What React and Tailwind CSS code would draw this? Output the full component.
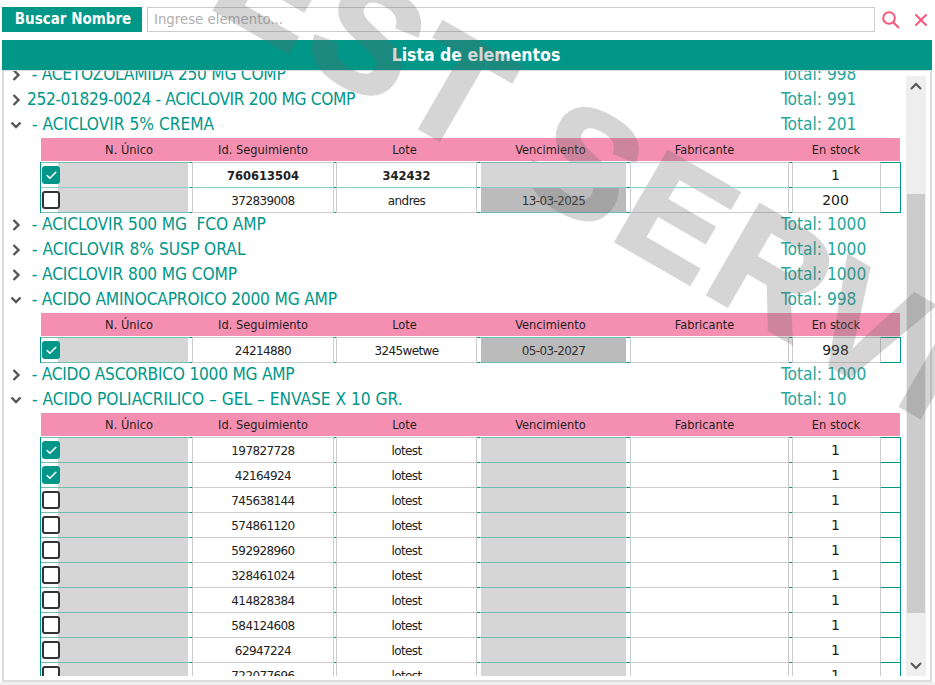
import React from "react";
import { X, Check } from "lucide-react";

const FONT = "font-['DejaVu_Sans_Condensed','DejaVu_Sans',sans-serif]";

function Chevron({ open }) {
  return (
    <svg width="12" height="12" viewBox="0 0 12 12" className="shrink-0" fill="none" stroke="#555" strokeWidth="2.4">
      {open ? <path d="M1.5 3.5 L6 8 L10.5 3.5" /> : <path d="M3.5 1 L8.5 6 L3.5 11" />}
    </svg>
  );
}

function Group({ name, total, open, track = "" }) {
  return (
    <div className="flex h-[25px] items-center">
      <div className="w-[23px] flex justify-end pr-[5px] shrink-0"><Chevron open={open} /></div>
      <div className={`w-[754px] shrink-0 whitespace-pre text-[17.2px] text-[#009688] leading-none ${track}`}>{name}</div>
      <div className="text-[17.2px] text-[#26a69a] leading-none whitespace-pre">{"Total: " + total}</div>
    </div>
  );
}

function TableHeader() {
  return (
    <div className="ml-[37px] mt-px mb-px flex h-[23px] w-[859px] items-center bg-[#f48fb1] text-[12.7px] text-[#1f1f1f]">
      <div className="w-[149px] pl-[27px] text-center">N. Único</div>
      <div className="ml-[2px] w-[142px] text-center">Id. Seguimiento</div>
      <div className="ml-[2px] w-[141px] pr-[4px] text-center">Lote</div>
      <div className="ml-[3px] w-[147px] pr-[6px] text-center">Vencimiento</div>
      <div className="ml-[3px] w-[159px] pr-[10px] text-center">Fabricante</div>
      <div className="ml-[3px] w-[88px] text-center">En stock</div>
    </div>
  );
}

function DataRow({ checked, id, lote, date, stock, selected }) {
  const line = selected ? "border-b-[#8fd0c4]" : "border-b-[#cccccc]";
  const gline = selected ? "border-b-[#8fd0c4]" : "border-b-[#72bdaf]";
  const txt = selected
    ? "font-bold text-[11.5px] pt-[3px] font-['DejaVu_Sans',sans-serif]"
    : "text-[12px] pt-[2px] font-['DejaVu_Sans',sans-serif] tracking-[-0.6px]";
  const white = `-my-px border-y border-t-[#cccccc] ${line} flex items-center justify-center text-[#222]`;
  const gray = `-my-px border-y border-t-[#72bdaf] ${gline} flex items-center justify-center`;
  return (
    <div className={`${selected ? "relative z-[1]" : ""} ml-[36px] -mb-px box-border flex h-[26px] w-[861px] border border-[#009688] bg-transparent`}>
      <div className={`${gray} relative w-[149px] pl-[17px] pr-[2px]`}>
        <div className="h-full w-full bg-[#d6d6d6]" />
        <div className={`absolute left-[1px] top-[3px] flex h-[18px] w-[18px] items-center justify-center rounded-[3px] ${checked ? "bg-[#009688]" : "border-2 border-[#333] bg-white"}`}>
          {checked && <Check size={13} color="white" strokeWidth={3} />}
        </div>
      </div>
      <div className={`${white} ml-[2px] w-[142px] border-x border-x-[#cccccc] ${txt}`}>{id}</div>
      <div className={`${white} ml-[2px] w-[141px] border-x border-x-[#cccccc] ${txt}`}>{lote}</div>
      <div className={`${gray} ml-[3px] w-[147px] px-px`}>
        <div className={`flex h-full w-full items-center justify-center text-[#333] ${txt} ${date ? "bg-[#bbbbbb]" : "bg-[#d6d6d6]"}`}>{date}</div>
      </div>
      <div className={`${white} ml-[3px] w-[159px] border-x border-x-[#cccccc]`} />
      <div className={`${white} ml-[3px] w-[88px] border-l border-l-[#cccccc] pr-[2px] text-[14px] font-['DejaVu_Sans',sans-serif]`}>{stock}</div>
      <div className={`-my-px flex-1 border-y border-[#009688] border-l-[1px] border-l-[#cccccc] ${selected ? "border-b-[#8fd0c4]" : ""}`} />
    </div>
  );
}

const lastRows = ["197827728", "42164924", "745638144", "574861120", "592928960", "328461024", "414828384", "584124608", "62947224", "722077696"];

export default function App() {
  return (
    <div className={`${FONT} relative flex h-[685px] w-[935px] flex-col overflow-hidden bg-white`}>
      <div className="mt-[7px] ml-[2px] flex h-[25px] items-center">
        <button className="h-[25px] w-[140px] bg-[#009688] pl-[2px] text-[15px] font-bold text-white">Buscar Nombre</button>
        <div className="ml-[5px] flex h-[25px] w-[728px] items-center border border-[#cccccc] pl-[6px] text-[14.8px] text-[#b0b0b0]">Ingrese elemento...</div>
        <svg width="18" height="18" viewBox="0 0 18 18" fill="none" stroke="#f9577a" strokeWidth="2" className="ml-[7px]">
          <circle cx="7" cy="7" r="5.8" />
          <path d="M11.2 11.2 L17 17" />
        </svg>
        <X size={20} color="#f9577a" strokeWidth={2.4} className="ml-[11px]" />
      </div>
      <div className="mt-[8px] ml-[2px] flex h-[30px] w-[930px] shrink-0 items-center justify-center bg-[#009688] pl-[18px] text-[17.5px] font-bold text-white">Lista de elementos</div>
      <div className="ml-[2px] box-border flex h-[612px] w-[930px] shrink-0 border-2 border-t-[1px] border-[#dcdcdc] pb-[4px]">
        <div className="h-full w-[902px] shrink-0 overflow-hidden">
          <div className="-mt-[9px]">
            <Group track="tracking-[-0.25px]" name=" - ACETOZOLAMIDA 250 MG COMP" total="998" />
            <Group track="tracking-[-0.37px]" name="252-01829-0024 - ACICLOVIR 200 MG COMP" total="991" />
            <Group open name=" - ACICLOVIR 5% CREMA" total="201" />
            <TableHeader />
            <DataRow selected checked id="760613504" lote="342432" stock="1" />
            <DataRow id="372839008" lote="andres" date="13-03-2025" stock="200" />
            <Group track="tracking-[-0.12px]" name=" - ACICLOVIR 500 MG  FCO AMP" total="1000" />
            <Group name=" - ACICLOVIR 8% SUSP ORAL" total="1000" />
            <Group track="tracking-[-0.12px]" name=" - ACICLOVIR 800 MG COMP" total="1000" />
            <Group open track="tracking-[-0.18px]" name=" - ACIDO AMINOCAPROICO 2000 MG AMP" total="998" />
            <TableHeader />
            <DataRow checked id="24214880" lote="3245wetwe" date="05-03-2027" stock="998" />
            <Group track="tracking-[-0.25px]" name=" - ACIDO ASCORBICO 1000 MG AMP" total="1000" />
            <Group open name=" - ACIDO POLIACRILICO – GEL – ENVASE X 10 GR." total="10" />
            <TableHeader />
            {lastRows.map((id, i) => (
              <DataRow key={id} checked={i < 2} id={id} lote="lotest" stock="1" />
            ))}
          </div>
        </div>
        <div className="mt-[5px] flex h-[600px] w-[20px] shrink-0 flex-col bg-[#eeeeee]">
          <div className="flex h-[20px] items-center justify-center">
            <svg width="12" height="8" viewBox="0 0 12 8" fill="none" stroke="#555" strokeWidth="2"><path d="M1 7 L6 2 L11 7" /></svg>
          </div>
          <div className="mt-[98px] ml-[1px] h-[419px] w-[18px] bg-[#cccccc]" />
          <div className="mt-[43px] flex h-[20px] items-center justify-center">
            <svg width="12" height="8" viewBox="0 0 12 8" fill="none" stroke="#555" strokeWidth="2"><path d="M1 1 L6 6 L11 1" /></svg>
          </div>
        </div>
      </div>
      <div className="flex-1 bg-[#f0f0f0]" />
      <div className="pointer-events-none absolute left-[148px] top-[-164px] origin-left rotate-[30deg] whitespace-pre font-['Liberation_Sans',sans-serif] text-[150px] leading-none font-bold tracking-[6px] text-[#686868] opacity-[0.27] [-webkit-text-stroke:4px_#686868]">TEST SERV<span className="ml-[5px]">ICE</span></div>
    </div>
  );
}
